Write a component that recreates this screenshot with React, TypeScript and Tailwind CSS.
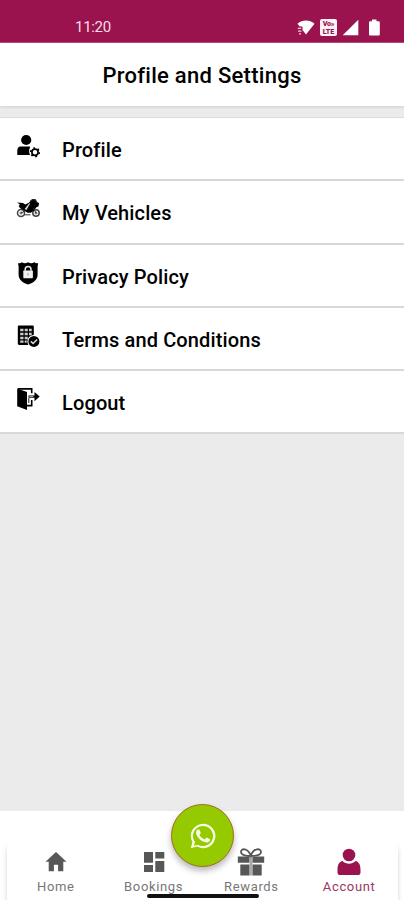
import type { ReactNode } from "react";

function ProfileIcon() {
  return (
    <svg width="24" height="24" viewBox="0 0 24 24" fill="#000">
      <circle cx="10.2" cy="6" r="5.1" />
      <path d="M4.500 12.500h8.700c1 0 1.200.6.6 1.600-1 1.900-.9 4.300.2 6.900H1.300v-4.200c0-2.600 1.100-4.300 3.200-4.300z" />
      <g fill="none" stroke="#000">
        <circle cx="19" cy="18.300" r="3.100" strokeWidth="1.700" />
        <circle cx="19" cy="18.300" r="4.300" strokeWidth="1.600" strokeDasharray="1.800 2.700" />
      </g>
    </svg>
  );
}

function BikeIcon() {
  return (
    <svg width="24" height="24" viewBox="0 0 24 24" fill="#000">
      <g fill="#fff" stroke="#444" strokeWidth="1.500">
        <circle cx="5" cy="16" r="3.500" />
        <circle cx="20" cy="16" r="3.200" />
      </g>
      <g fill="none" stroke="#555" strokeWidth="1">
        <circle cx="5" cy="16" r="1" />
        <circle cx="20" cy="16" r="1" />
      </g>
      <path d="M1 5.500 7 6l2.300 1.500 3.500-1.700 3-3 3.200-.8 2.200 3.200 1.800.8-.4 3.200-2.200 1-2.400 3.200-3.200 2.400h-3.300l-3.200-2-4.300-2.800L2.700 9l1.200-1.600z" />
      <path d="m8.700 12 4.300-5.500 1.300-.3-3.900 6.700z" fill="#ddd" />
      <path d="m14 4.500 2.500-2 2.700.3 1.800 3.100" fill="none" stroke="#222" strokeWidth="1.200" />
      <path d="m5 16 4-2m11 2-2.300-4.500M8 17.800h6.500" stroke="#333" />
    </svg>
  );
}

function PrivacyIcon() {
  return (
    <svg width="24" height="24" viewBox="0 0 24 24">
      <path d="M2 2.200c1.600.4 2.800.1 4-.9 1.800 1.300 4 1.200 6.100 0 2 1.200 4.300 1.300 6.100 0 1.200 1 2.400 1.300 4 .9l-.6 3.200v8.100c0 5.300-3.900 8.300-9.500 10.100-5.600-1.800-9.500-4.800-9.500-10.100V5.400z" fill="#000" />
      <path d="M9.200 9.800V8.500a2.900 2.900 0 0 1 5.800 0v1.300" fill="none" stroke="#eee" strokeWidth="1.500" />
      <rect x="7.300" y="9.500" width="9.600" height="7.700" rx=".8" fill="#f0f0f0" />
      <path d="M12.100 12v2.500" stroke="#aaa" strokeWidth="1.200" />
    </svg>
  );
}

function TermsIcon() {
  return (
    <svg width="24" height="24" viewBox="0 0 24 24">
      <path d="M3.200 1.500h13.300c.8 0 1.300.5 1.300 1.300V21H3.200c-.9 0-1.400-.5-1.400-1.400V2.900c0-.9.500-1.400 1.400-1.400z" fill="#000" />
      <path d="M4.200 6h3.300M8.700 6h3.100M13 6h2.700M4.200 10h3.300M8.700 10h3.100M13 10h2.700M4.200 14h3.300M8.700 14h3.100M4.200 17.600h3.300M8.700 17.600h2" stroke="#ccc" strokeWidth="2.400" />
      <circle cx="17.900" cy="17.400" r="6.500" fill="#fff" />
      <circle cx="17.900" cy="17.400" r="5.500" fill="#000" />
      <path d="m14.900 17.400 2.200 2.100 4-4" fill="none" stroke="#ddd" strokeWidth="1.500" />
    </svg>
  );
}

function LogoutIcon() {
  return (
    <svg width="24" height="24" viewBox="0 0 24 24">
      <path d="M1.200 1.500 11 5v18l-9.800-3.800z" fill="#000" />
      <path d="M2 1.900h13.700v4.300M15.700 13v5.600H11" fill="none" stroke="#000" strokeWidth="1.600" />
      <path d="M12.500 10.800V8.400h6V4.900l5.200 4.700-5.200 4.700v-3.500z" fill="#000" />
      <path d="M13.300 9.600h4" stroke="#ddd" strokeWidth=".8" />
      <path d="M12.800 11v5" stroke="#222" />
    </svg>
  );
}

const rows: { label: string; icon: ReactNode }[] = [
  { label: "Profile", icon: <ProfileIcon /> },
  { label: "My Vehicles", icon: <BikeIcon /> },
  { label: "Privacy Policy", icon: <PrivacyIcon /> },
  { label: "Terms and Conditions", icon: <TermsIcon /> },
  { label: "Logout", icon: <LogoutIcon /> },
];

function StatusBar() {
  return (
    <header className="flex h-[43px] items-start justify-between border-b border-[#b54c78] bg-[#9a134e] pr-[23px] pl-[75px] pt-[19px] text-[#f8dfe9]">
      <span className="text-[15px] leading-4 tracking-[-0.300px]">11:20</span>
      <div className="flex h-[17px] items-center">
        <svg width="18" height="17" viewBox="0 0 18 17" fill="#fff">
          <path d="M.5 4.700C5.500.5 12.500.5 17.500 4.700L9 15.500 5.500 11V7.500H2.700z" />
          <path d="M.8 9.400h3.400M1 12.200h3.500M2 14.900h2" stroke="#f1c9da" strokeWidth="1.300" />
        </svg>
        <div className="ml-[5px] flex h-[17px] w-[17px] flex-col items-center justify-center rounded-[2px] bg-[#fff2f7] text-[7px] leading-[8px] font-black text-[#9a134e]">
          <span className="tracking-[-0.200px]">Vo»</span>
          <span>LTE</span>
        </div>
        <svg className="ml-[5px]" width="17" height="17" viewBox="0 0 17 17" fill="#fff">
          <path d="M16.300.7v15.600H.7z" />
        </svg>
        <svg className="ml-[9px]" width="13" height="17" viewBox="0 0 13 17" fill="#fff">
          <path d="M4 .5h4.500v1.800h2c.8 0 1.300.5 1.300 1.300v11.600c0 .8-.5 1.300-1.300 1.300H2.300c-.8 0-1.300-.5-1.300-1.300V3.600c0-.8.5-1.300 1.300-1.300H4z" />
        </svg>
      </div>
    </header>
  );
}

function HomeIcon() {
  return (
    <svg width="28" height="28" viewBox="0 0 28 28" fill="#575757">
      <path d="M14 4 24.500 13.700h-3.200v9.600h-5.200v-6.500h-4.200v6.500H6.700v-9.600H3.500z" />
    </svg>
  );
}

function BookingsIcon() {
  return (
    <svg width="28" height="28" viewBox="0 0 28 28" fill="#575757">
      <path d="M4 4h9v10.700H4zM15.300 4h9v6.600h-9zM4 17h9v7H4zM15.300 13h9v11h-9z" />
    </svg>
  );
}

function GiftIcon() {
  return (
    <svg width="28" height="28" viewBox="0 0 28 28">
      <path d="M.8 8.500h11.800v6.300H.8zM15.400 8.500h11.800v6.300H15.400zM3.300 16.600h9.300v10.800H3.300zM15.400 16.600h9.300v10.800h-9.300z" fill="#575757" />
      <path d="M12.600 8.500h2.800v18.900h-2.800z" fill="#aaa" />
      <path d="M13.700 8C11 8 4 7.500 4 4c0-3.800 6.800-4.600 9.800 3.700C16.800-.6 24 .2 24 4c0 3.500-7.500 4-10.300 4z" fill="none" stroke="#575757" strokeWidth="1.800" />
    </svg>
  );
}

function AccountIcon() {
  return (
    <svg width="28" height="28" viewBox="0 0 28 28" fill="#9a134e">
      <circle cx="14" cy="7" r="6.300" />
      <path d="M7.500 13.100c3.600 3.500 9.400 3.500 13 0 3.200.6 5 3.700 5 8.400v3c0 1.700-1.100 2.600-2.700 2.600H5.200c-1.600 0-2.700-.9-2.700-2.600v-3c0-4.700 1.800-7.800 5-8.400z" />
    </svg>
  );
}

const tabs: { label: string; icon: ReactNode; active?: boolean }[] = [
  { label: "Home", icon: <HomeIcon /> },
  { label: "Bookings", icon: <BookingsIcon /> },
  { label: "Rewards", icon: <GiftIcon /> },
  { label: "Account", icon: <AccountIcon />, active: true },
];

function BottomNav() {
  return (
    <footer className="relative h-[89px] bg-white pr-[6px] pl-[7px] pt-[32px]">
      <nav className="grid h-[57px] grid-cols-4 rounded-t-[5px] bg-white shadow-[0_4px_5px_rgba(0,0,0,0.18)]">
        {tabs.map((tab) => (
          <div key={tab.label} className="flex flex-col items-center pt-[5px]">
            {tab.icon}
            <span className={tab.active ? "mt-[3px] text-[13px] leading-4 tracking-[0.650px] text-[#9a3764]" : "mt-[3px] text-[13px] leading-4 tracking-[0.650px] text-[#777]"}>
              {tab.label}
            </span>
          </div>
        ))}
      </nav>
      <div className="absolute top-[83px] left-[147px] h-[4px] w-[112px] rounded-full bg-[#111]" />
      <button aria-label="WhatsApp" className="absolute top-[-7px] left-[171px] flex h-[63px] w-[63px] items-center justify-center rounded-full border border-[#a56b20] bg-[#95c900] shadow-[0_4px_6px_rgba(0,0,0,0.28)]">
        <svg width="28" height="28" viewBox="0 0 24 24" fill="#f5ffe0">
          <path d="M17.472 14.382c-.297-.149-1.758-.867-2.030-.967-.273-.099-.471-.148-.670.150-.197.297-.767.966-.940 1.164-.173.199-.347.223-.644.075-.297-.150-1.255-.463-2.390-1.475-.883-.788-1.480-1.761-1.653-2.059-.173-.297-.018-.458.130-.606.134-.133.298-.347.446-.520.149-.174.198-.298.298-.497.099-.198.050-.371-.025-.520-.075-.149-.669-1.612-.916-2.207-.242-.579-.487-.500-.669-.510-.173-.008-.371-.010-.570-.010-.198 0-.520.074-.792.372-.272.297-1.040 1.016-1.040 2.479 0 1.462 1.065 2.875 1.213 3.074.149.198 2.096 3.200 5.077 4.487.709.306 1.262.489 1.694.625.712.227 1.360.195 1.871.118.571-.085 1.758-.719 2.006-1.413.248-.694.248-1.289.173-1.413-.074-.124-.272-.198-.570-.347M12 1.500A10.500 10.500 0 0 0 2.900 17.200L1.500 22.500l5.400-1.400A10.500 10.500 0 1 0 12 1.500m0 19.100a8.600 8.600 0 0 1-4.500-1.200l-3.300.9.900-3.200A8.600 8.600 0 1 1 12 20.600" />
        </svg>
      </button>
    </footer>
  );
}

export default function App() {
  return (
    <div className="flex h-[900px] w-[404px] flex-col overflow-hidden bg-[#ebebeb] font-[Roboto,sans-serif]">
      <StatusBar />
      <div className="flex h-[63px] shrink-0 items-center justify-center bg-white pt-[3px] shadow-[0_1px_3px_rgba(0,0,0,0.12)]">
        <h1 className="text-[22px] leading-7 font-medium tracking-[0.280px] text-black">Profile and Settings</h1>
      </div>
      <main className="mt-[11px] flex-1 border-t border-[#dcdcdc]">
        {rows.map((row) => (
          <div key={row.label} className="flex h-[63.300px] border-b-2 border-[#d8d8d8] bg-white pl-4">
            <div className="pt-4">{row.icon}</div>
            <span className="ml-[22px] pt-[18px] text-[20px] leading-7 font-medium tracking-[0.130px] text-black">{row.label}</span>
          </div>
        ))}
      </main>
      <BottomNav />
    </div>
  );
}
